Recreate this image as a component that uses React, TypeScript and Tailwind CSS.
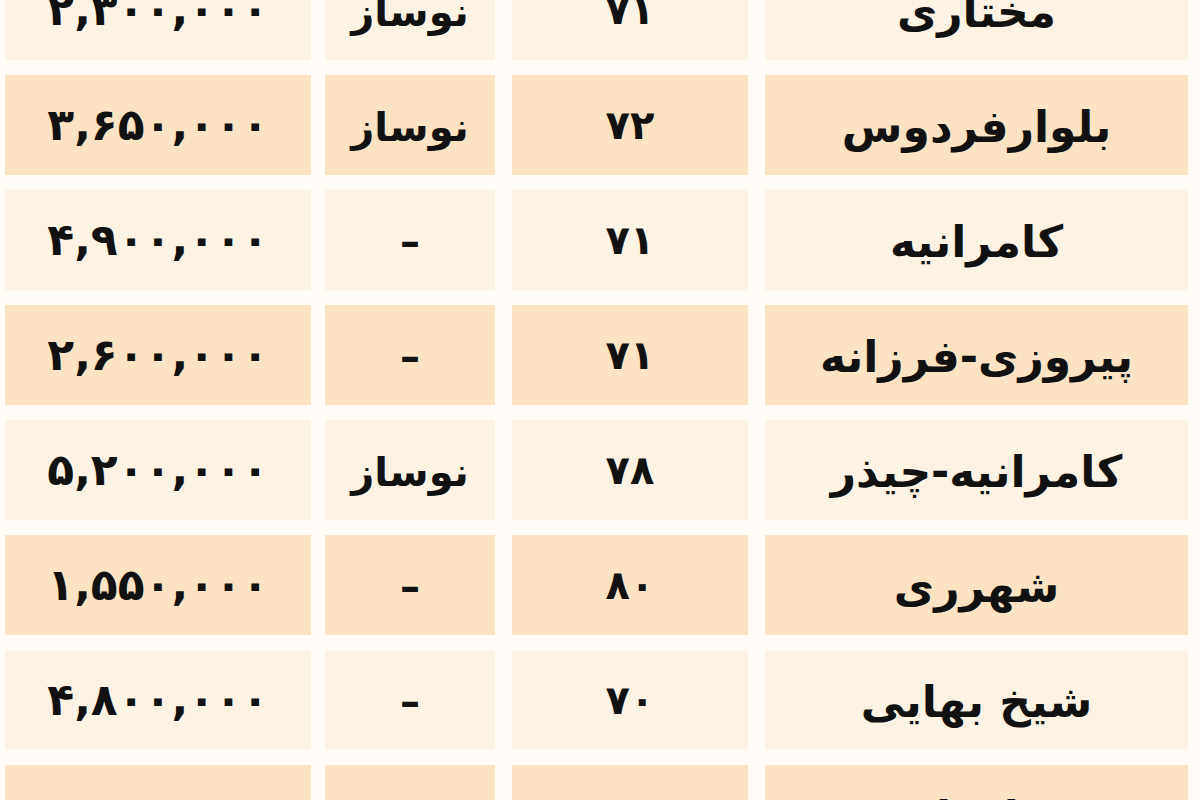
import React from "react"

type Row = {
    place: string
    age: string
    status: string
    price: string
    dark: boolean
}

const rows: Row[] = [
    { place: "مختاری", age: "۷۱", status: "نوساز", price: "۲,۳۰۰,۰۰۰", dark: false },
    { place: "بلوارفردوس", age: "۷۲", status: "نوساز", price: "۳,۶۵۰,۰۰۰", dark: true },
    { place: "کامرانیه", age: "۷۱", status: "–", price: "۴,۹۰۰,۰۰۰", dark: false },
    { place: "پیروزی-فرزانه", age: "۷۱", status: "–", price: "۲,۶۰۰,۰۰۰", dark: true },
    { place: "کامرانیه-چیذر", age: "۷۸", status: "نوساز", price: "۵,۲۰۰,۰۰۰", dark: false },
    { place: "شهرری", age: "۸۰", status: "–", price: "۱,۵۵۰,۰۰۰", dark: true },
    { place: "شیخ بهایی", age: "۷۰", status: "–", price: "۴,۸۰۰,۰۰۰", dark: false },
    { place: "نیاوران", age: "۷۰", status: "نوساز", price: "۶,۰۰۰,۰۰۰", dark: true },
]

export default function App() {
    return (
        <div
            className="w-[1200px] h-[800px] overflow-hidden bg-[#fffcf7] text-[#111]"
            style={{ fontFamily: '"DejaVu Sans", "Noto Sans", sans-serif' }}
        >
            <div dir="rtl" className="-mt-[40px] flex flex-col gap-[15px] pr-[12px] pl-[5px]">
                {rows.map((r, i) => {
                    const cell = r.dark ? "bg-[#fbe3c3]" : "bg-[#fdf3e5]"
                    return (
                        <div key={i} className="flex h-[100px] gap-[17px]">
                            <div className={`w-[423px] flex items-center justify-center pt-[4px] text-[44px] font-bold ${cell}`}>
                                {r.place}
                            </div>
                            <div className={`w-[236px] flex items-center justify-center text-[40px] font-bold ${cell}`}>
                                {r.age}
                            </div>
                            <div className={`w-[170px] flex items-center justify-center pt-[4px] text-[40px] font-bold ${cell}`}>
                                {r.status}
                            </div>
                            <div className={`w-[306px] mr-[-3px] flex items-center justify-center text-[44px] font-bold tracking-[3px] ${cell}`}>
                                {r.price}
                            </div>
                        </div>
                    )
                })}
            </div>
        </div>
    )
}
